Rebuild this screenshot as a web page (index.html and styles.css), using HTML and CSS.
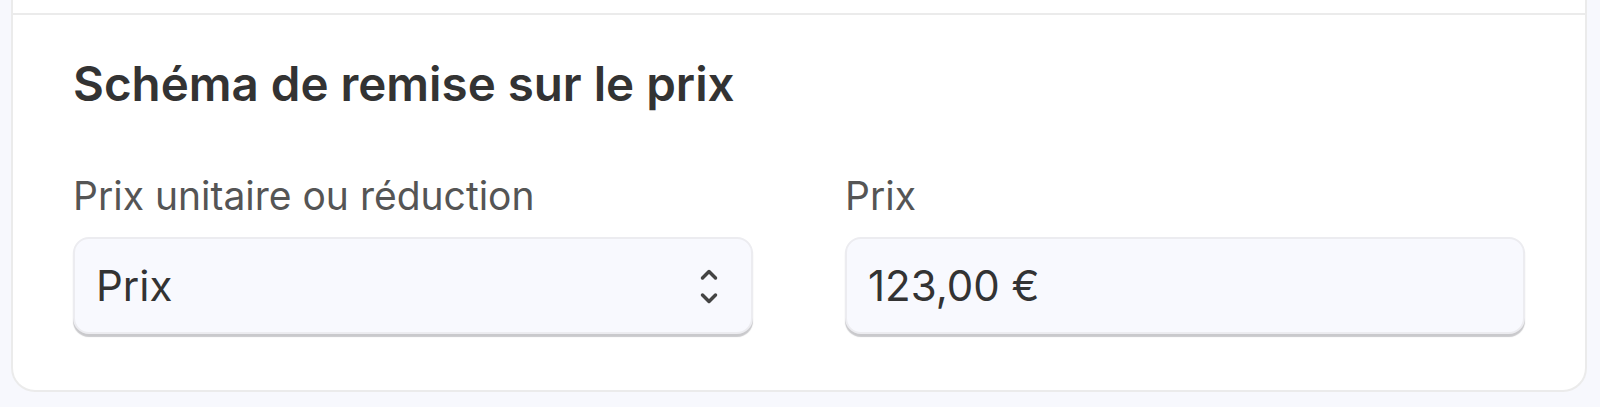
FILE: index.html
```html
<!DOCTYPE html>
<html lang="fr">
<head>
<meta charset="UTF-8">
<meta name="viewport" content="width=device-width, initial-scale=1.0">
<title>Schéma de remise</title>
<link rel="stylesheet" href="styles.css">
</head>
<body>
<div class="card">
    <!-- fin de la section précédente -->
    <div class="section section-prev"></div>

    <div class="section">
        <h2>Schéma de remise sur le prix</h2>
        <div class="fields">
            <div class="field">
                <label for="type">Prix unitaire ou réduction</label>
                <div class="select" id="type">
                    <span>Prix</span>
                    <svg class="chevrons" width="18" height="38" viewBox="0 0 18 38">
                        <path d="M2.5 11 L9 4.5 L15.5 11" fill="none" stroke="#444" stroke-width="3.5" stroke-linecap="round" stroke-linejoin="round"/>
                        <path d="M2.5 28 L9 34.5 L15.5 28" fill="none" stroke="#444" stroke-width="3.5" stroke-linecap="round" stroke-linejoin="round"/>
                    </svg>
                </div>
            </div>
            <div class="field">
                <label for="price">Prix</label>
                <div class="input" id="price">123,00 €</div>
            </div>
        </div>
    </div>
</div>
</body>
</html>
```

FILE: styles.css
```css
body {
    font-family: Inter, "Noto Sans", sans-serif;
    margin: 0;
    padding: 0;
    background-color: #f7f8fd;
    height: 407px;
}

.card {
    margin: 0 13px 0 11px;
    background-color: #fff;
    border: 2px solid #ebebeb;
    border-top: none;
    border-radius: 0 0 24px 24px;
}

.section {
    border-top: 2px solid #ebebeb;
    padding: 40px 60px 56px 60px;
}

.section-prev {
    height: 13px;
    border-top: none;
    padding: 0;
}

h2 {
    margin: 0 0 59px 0;
    font-size: 47.5px;
    font-weight: 600;
    color: #333;
    line-height: 58px;
}

.fields {
    display: grid;
    grid-template-columns: 1fr 1fr;
    gap: 92px;
}

.field label {
    display: block;
    font-size: 39px;
    line-height: 47px;
    color: #555;
    margin-bottom: 18px;
}

.select,
.input {
    box-sizing: border-box;
    height: 97px;
    display: flex;
    align-items: center;
    justify-content: space-between;
    padding: 0 33px 0 21px;
    background-color: #f8f9fe;
    border: 2px solid #ececf0;
    border-radius: 16px;
    box-shadow: 0 3px 1px #c9c9cc;
    font-size: 42px;
    color: #333;
}

.chevrons {
    display: block;
}
```
